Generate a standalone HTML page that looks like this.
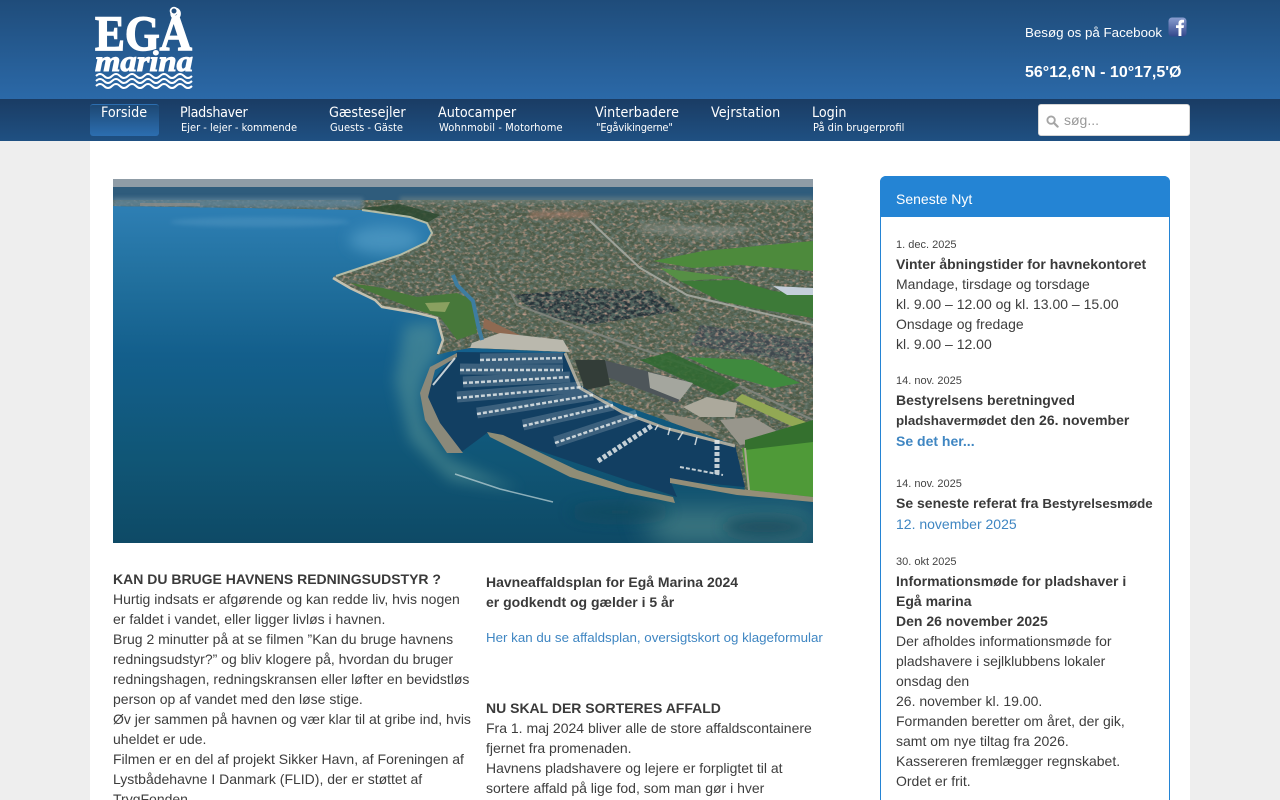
<!DOCTYPE html>
<html lang="da"><head><meta charset="utf-8"><title>Egå Marina</title>
<style>
*{box-sizing:border-box;margin:0;padding:0}
html,body{width:1280px;height:800px;overflow:hidden;background:#eee;font-family:"Liberation Sans",sans-serif;font-size:14px;color:#3d3d3d}
#root{position:relative;width:1280px;height:800px;overflow:hidden}
.a{position:absolute;white-space:nowrap}
#hd{left:0;top:0;width:1280px;height:99px;background:linear-gradient(#1f4c7a,#2b69a8)}
#nv{left:0;top:99px;width:1280px;height:42px;background:linear-gradient(#1a3c64,#1f5082)}
#mn{left:90px;top:141px;width:1100px;height:659px;background:#fff}
.n{font-family:"DejaVu Sans Condensed","DejaVu Sans",sans-serif;font-stretch:condensed;color:#fff;font-size:14.2px;line-height:16px}
.s{font-family:"DejaVu Sans Condensed","DejaVu Sans",sans-serif;font-stretch:condensed;color:#fff;font-size:11px;line-height:12px}
.l{position:absolute;white-space:nowrap;line-height:20px;height:20px}
b{font-weight:bold;color:#3a3a3a}
.d{font-size:11px;color:#444}
.k{color:#3f86c2}
.m{font-size:13.33px}
</style></head><body><div id="root">
<div id="hd" class="a"></div>
<div id="nv" class="a"></div>
<div id="mn" class="a"></div>

<svg class="a" style="left:92px;top:4px" width="104" height="88" viewBox="0 0 104 88">
<text x="3" y="46" font-family="Liberation Serif,serif" font-weight="bold" font-size="50" fill="#fff" stroke="#fff" stroke-width="1.400" textLength="97" lengthAdjust="spacingAndGlyphs">EGÅ</text>
<circle cx="82" cy="7" r="3.400" fill="#24507f" stroke="#fff" stroke-width="1.800"/>
<text x="3" y="67" font-family="Liberation Serif,serif" font-weight="bold" font-style="italic" font-size="30" fill="#fff" stroke="#fff" stroke-width="1" textLength="98" lengthAdjust="spacingAndGlyphs">marina</text>
<g fill="none" stroke="#fff" stroke-width="2">
<path d="M4 72q4-4 8 0t8 0 8 0 8 0 8 0 8 0 8 0 8 0 8 0 8 0 8 0 8 0"/>
<path d="M4 77q4-4 8 0t8 0 8 0 8 0 8 0 8 0 8 0 8 0 8 0 8 0 8 0 8 0"/>
<path d="M4 82q4-4 8 0t8 0 8 0 8 0 8 0 8 0 8 0 8 0 8 0 8 0 8 0 8 0"/>
</g></svg>

<div class="a" style="left:1025px;top:25px;font-size:13.33px;line-height:16px;color:#fff">Besøg os på Facebook</div>
<svg class="a" style="left:1168px;top:17px" width="19" height="20" viewBox="0 0 19 20"><defs><linearGradient id="fb" x1="0" y1="0" x2="0" y2="1"><stop offset="0" stop-color="#8a9ed0"/><stop offset="1" stop-color="#34488c"/></linearGradient></defs><rect x=".5" y=".5" width="18" height="19" rx="3.5" fill="url(#fb)"/><path d="M10.500 19V11H8V8.200h2.500V6.300C10.500 4 12 2.800 14 2.800h2v2.800h-1.300c-1 0-1.300.5-1.300 1.200v1.400H16L15.600 11h-2.200v8z" fill="#fff"/></svg>
<div class="a" style="left:1025px;top:64px;font-size:16px;line-height:18px;font-weight:bold;color:#fff">56°12,6'N - 10°17,5'Ø</div>

<div class="a" style="left:90px;top:104px;width:69px;height:32px;border-radius:3px;background:linear-gradient(#1d4874,#2c6eb0);border-top:1px solid #2c6eb0"></div>
<div class="a n" style="left:101px;top:105px">Forside</div>
<div class="a n" style="left:180px;top:105px;letter-spacing:-.3px">Pladshaver</div><div class="a s" style="left:181px;top:122px">Ejer - lejer - kommende</div>
<div class="a n" style="left:329px;top:105px">Gæstesejler</div><div class="a s" style="left:330px;top:122px">Guests - Gäste</div>
<div class="a n" style="left:438px;top:105px">Autocamper</div><div class="a s" style="left:439px;top:122px;letter-spacing:.1px">Wohnmobil - Motorhome</div>
<div class="a n" style="left:595px;top:105px;letter-spacing:.1px">Vinterbadere</div><div class="a s" style="left:596px;top:122px;letter-spacing:-.2px">"Egåvikingerne"</div>
<div class="a n" style="left:711px;top:105px;letter-spacing:.1px">Vejrstation</div>
<div class="a n" style="left:812px;top:105px">Login</div><div class="a s" style="left:813px;top:122px">På din brugerprofil</div>

<div class="a" style="left:1038px;top:104px;width:152px;height:32px;background:#fff;border:1px solid #d5d5d5;border-radius:3px"></div>
<svg class="a" style="left:1046px;top:115px" width="13" height="13" viewBox="0 0 14 14"><circle cx="5.500" cy="5.500" r="4" fill="none" stroke="#a5a5a5" stroke-width="2"/><path d="M8.500 8.500L12.500 12.500" stroke="#a5a5a5" stroke-width="2.400" stroke-linecap="round"/></svg>
<div class="a" style="left:1064px;top:112px;font-size:14px;line-height:16px;color:#999">søg...</div>

<svg class="a" style="left:113px;top:179px" width="700" height="364" viewBox="113 179 700 364">
<defs>
<linearGradient id="w" gradientUnits="userSpaceOnUse" x1="0" y1="200" x2="0" y2="543"><stop offset="0" stop-color="#2f80b6"/><stop offset=".22" stop-color="#22719f"/><stop offset=".45" stop-color="#135f8c"/><stop offset=".75" stop-color="#105676"/><stop offset="1" stop-color="#0e4a66"/></linearGradient>
<filter id="bl" filterUnits="userSpaceOnUse" x="0" y="100" width="1000" height="600"><feGaussianBlur stdDeviation="14"/></filter>
<filter id="bs" filterUnits="userSpaceOnUse" x="0" y="100" width="1000" height="600"><feGaussianBlur stdDeviation="2"/></filter>
<filter id="bm" filterUnits="userSpaceOnUse" x="0" y="100" width="1000" height="600"><feGaussianBlur stdDeviation="7"/></filter>
<filter id="tx" filterUnits="userSpaceOnUse" x="113" y="179" width="700" height="364"><feTurbulence type="fractalNoise" baseFrequency=".26 .38" numOctaves="2" seed="7"/><feColorMatrix values="0 0 0 0 .6  0 0 0 0 .36  0 0 0 0 .28  2.400 0 0 0 -1.200"/></filter>
<filter id="tx2" filterUnits="userSpaceOnUse" x="113" y="179" width="700" height="364"><feTurbulence type="fractalNoise" baseFrequency=".2 .3" numOctaves="2" seed="21"/><feColorMatrix values="0 0 0 0 .12  0 0 0 0 .18  0 0 0 0 .15  2.600 0 0 0 -.95"/></filter>
<clipPath id="im"><rect x="113" y="179" width="700" height="364"/></clipPath>
<clipPath id="ld"><path d="M113 187H813V500L745 490 735 445 580 390 565 352 470 348 448 352 437 355 443 340 437 318 417 313 382 307 375 300 350 288 333 277 360 268 400 255 427 242 432 233 427 223 410 217 362 210 250 208 113 206z"/></clipPath>
</defs>
<g clip-path="url(#im)">
<rect x="113" y="179" width="700" height="364" fill="url(#w)"/>
<ellipse cx="260" cy="222" rx="90" ry="5" fill="#74add0" opacity=".25" filter="url(#bs)"/>
<ellipse cx="385" cy="240" rx="36" ry="14" fill="#5ca4cc" opacity=".6" filter="url(#bm)"/>
<path d="M405 325L437 322 440 352 425 375 420 400 425 425 447 458 520 490 450 480 410 440 395 380z" fill="#65a09c" opacity=".48" filter="url(#bm)"/>
<path d="M640 510H813V543H660z" fill="#568f8e" opacity=".7" filter="url(#bl)"/>
<ellipse cx="765" cy="527" rx="42" ry="10" fill="#18465a" opacity=".8" filter="url(#bm)"/>
<ellipse cx="620" cy="512" rx="50" ry="8" fill="#19485c" opacity=".7" filter="url(#bm)"/>

<rect x="113" y="179" width="700" height="8" fill="#8f9ca6"/>

<g clip-path="url(#ld)">
<rect x="113" y="187" width="700" height="323" fill="#4e5b48"/>
<path d="M513 295L593 288 653 291 680 311 587 325 540 315z" fill="#27343a"/>
<path d="M700 325L813 340 813 365 690 345z" fill="#3f484e"/>
<rect x="113" y="187" width="700" height="323" filter="url(#tx2)"/>
<rect x="113" y="187" width="700" height="323" filter="url(#tx)"/>
<rect x="113" y="187" width="700" height="13" fill="#2f5c7c"/>
<rect x="113" y="198" width="250" height="10" fill="#5f8298" opacity=".85" filter="url(#bs)"/>
<rect x="140" y="203" width="60" height="3" fill="#9a8f86" opacity=".6"/>
<path d="M362 208L410 217 427 223 440 215 400 204z" fill="#2d4a30" opacity=".85"/>
<rect x="400" y="197" width="413" height="6" fill="#7a8a86" opacity=".55" filter="url(#bs)"/>
<path d="M530 211H590V218H530z" fill="#a87a68" opacity=".6" filter="url(#bs)"/>
<path d="M640 222L760 228 720 238 640 232z" fill="#9a9e98" opacity=".4" filter="url(#bs)"/>
<path d="M653 261L703 251 813 241V271L740 265 693 268z" fill="#4d8a3c"/>
<path d="M660 268L737 278 680 281z" fill="#568f45"/>
<path d="M680 281L737 280 773 291 813 295V318L753 308 720 301z" fill="#3d7a38"/>
<path d="M773 286L813 288V295L787 295z" fill="#c4cfda"/>
<path d="M350 283L373 293 417 310 440 317 457 340 477 333 473 300 457 293 417 297 383 288z" fill="#47783a"/>
<path d="M425 303L450 302 445 312 430 311z" fill="#8aa060"/>
<path d="M484 318L530 340 520 342 483 328z" fill="#8f6a52"/>
<path d="M590 221L640 268 687 295 813 325" stroke="#9fa39a" stroke-width="2" fill="none"/>
<path d="M510 291L517 305 580 328 653 353 727 380 813 420" stroke="#7e837b" stroke-width="2" fill="none"/>
<path d="M687 357L753 360 800 383 773 388 720 373z" fill="#3f8a3e"/>
<path d="M670 352L740 385 720 396 640 360z" fill="#2f6a30" opacity=".85"/>
<path d="M742 394L813 425V436L735 400z" fill="#92a854"/>
<path d="M472 343L500 333 563 340 570 352 470 348z" fill="#bab8ad"/>
<path d="M603 360L693 383 677 403 607 377z" fill="#4e565a"/>
<path d="M648 372L693 383 680 400 650 388z" fill="#a4a69e"/>
<path d="M575 360H605L610 385 585 390z" fill="#333d38"/>
<path d="M683 407L707 397 737 403 735 417 700 417z" fill="#aca99c"/>
<path d="M660 413L700 420 720 432 680 430z" fill="#8f8a7c"/>
<path d="M720 420L753 417 788 438 740 445z" fill="#98968c"/>
<path d="M742 448L813 440V497L748 490z" fill="#4f9a38"/>
<path d="M745 440L813 420V442L745 450z" fill="#34702e"/>
</g>
<path d="M453 275L457 285 473 301 478 325 482 340" stroke="#3e7da0" stroke-width="4" fill="none"/>
<path d="M362 210L410 217 427 223 432 233 427 242 400 255 360 268 336 276" stroke="#b4bca6" stroke-width="2" fill="none"/>
<path d="M333 278L350 288 375 300 382 307 417 313 437 318 443 340 438 354" stroke="#c4c1b0" stroke-width="2.500" fill="none"/>

<path d="M457 352L567 353 577 383 620 410 663 427 735 445 745 487 670 480 677 497 487 433 460 453 430 420 428 387z" fill="#123f62"/>
<path d="M457 353L430 367 420 393 425 420 447 453 463 453 440 423 428 397 435 370 457 357z" fill="#8b897a"/>
<path d="M487 432L503 435 577 470 627 487 673 497 675 503 627 493 570 477 490 437z" fill="#8f8d76"/>
<path d="M670 478L720 487 813 497V502L737 495 670 483z" fill="#948e78"/>
<path d="M745 448L749 490" stroke="#aaa690" stroke-width="2" fill="none"/>
<path d="M565 353L580 388 622 412 665 428 735 446" stroke="#a9a89c" stroke-width="3" fill="none"/>
<g fill="none" stroke="#dfe5e8" opacity=".2" stroke-width="11">
<path d="M480 359L563 358"/><path d="M460 369L563 370"/><path d="M463 382L570 377"/><path d="M457 397L583 387"/><path d="M477 413L593 395"/><path d="M523 425L613 405"/><path d="M555 442L637 415"/>
</g>
<g fill="none" stroke="#e4e9ea" stroke-width="2.500" opacity=".85" stroke-dasharray="4 2">
<path d="M480 360L563 358"/><path d="M460 370L563 370"/><path d="M463 383L570 377"/><path d="M457 398L583 387"/><path d="M477 414L593 395"/><path d="M523 426L613 405"/><path d="M555 443L637 415"/>
<path d="M598 461L653 425" stroke-width="5"/>
<path d="M680 467L723 475" stroke-width="2"/>
<path d="M717 440V475" stroke-width="5"/>
<path d="M433 385L455 358" stroke-width="2" stroke-dasharray="none"/>
<path d="M655 430L658 425M670 428L668 435M683 432L678 440M697 437L695 445" stroke-width="1.500" stroke-dasharray="none"/>
</g>
<path d="M455 474L500 489 553 502" stroke="#cfe0e2" stroke-width="1.500" fill="none" opacity=".65"/>
</g>
</svg>

<div class="l" style="left:113px;top:569px"><b>KAN DU BRUGE HAVNENS REDNINGSUDSTYR ?</b></div>
<div class="l" style="left:113px;top:589px">Hurtig indsats er afgørende og kan redde liv, hvis nogen</div>
<div class="l" style="left:113px;top:609px">er faldet i vandet, eller ligger livløs i havnen.</div>
<div class="l" style="left:113px;top:629px">Brug 2 minutter på at se filmen ”Kan du bruge havnens</div>
<div class="l" style="left:113px;top:649px">redningsudstyr?” og bliv klogere på, hvordan du bruger</div>
<div class="l" style="left:113px;top:669px">redningshagen, redningskransen eller løfter en bevidstløs</div>
<div class="l" style="left:113px;top:689px">person op af vandet med den løse stige.</div>
<div class="l" style="left:113px;top:709px">Øv jer sammen på havnen og vær klar til at gribe ind, hvis</div>
<div class="l" style="left:113px;top:729px">uheldet er ude.</div>
<div class="l" style="left:113px;top:749px">Filmen er en del af projekt Sikker Havn, af Foreningen af</div>
<div class="l" style="left:113px;top:769px">Lystbådehavne I Danmark (FLID), der er støttet af</div>
<div class="l" style="left:113px;top:789px">TrygFonden.</div>

<div class="l" style="left:486px;top:572px"><b>Havneaffaldsplan for Egå Marina 2024</b></div>
<div class="l" style="left:486px;top:592px"><b>er godkendt og gælder i 5 år</b></div>
<div class="l k m" style="left:486px;top:628px">Her kan du se affaldsplan, oversigtskort og klageformular</div>
<div class="l" style="left:486px;top:698px"><b>NU SKAL DER SORTERES AFFALD</b></div>
<div class="l" style="left:486px;top:718px">Fra 1. maj 2024 bliver alle de store affaldscontainere</div>
<div class="l" style="left:486px;top:738px">fjernet fra promenaden.</div>
<div class="l" style="left:486px;top:758px">Havnens pladshavere og lejere er forpligtet til at</div>
<div class="l" style="left:486px;top:778px">sortere affald på lige fod, som man gør i hver</div>

<div class="a" style="left:880px;top:176px;width:290px;height:640px;border:1px solid #2484d4;border-radius:6px 6px 0 0;background:#fff"></div>
<div class="a" style="left:880px;top:176px;width:290px;height:41px;background:#2484d4;border-radius:6px 6px 0 0"></div>
<div class="a" style="left:896px;top:190px;font-size:14px;line-height:18px;color:#fff">Seneste Nyt</div>

<div class="l d" style="left:896px;top:235px">1. dec. 2025</div>
<div class="l" style="left:896px;top:254px"><b>Vinter åbningstider for havnekontoret</b></div>
<div class="l" style="left:896px;top:274px">Mandage, tirsdage og torsdage</div>
<div class="l" style="left:896px;top:294px">kl. 9.00 – 12.00 og kl. 13.00 – 15.00</div>
<div class="l" style="left:896px;top:314px">Onsdage og fredage</div>
<div class="l" style="left:896px;top:334px">kl. 9.00 – 12.00</div>

<div class="l d" style="left:896px;top:371px">14. nov. 2025</div>
<div class="l" style="left:896px;top:390px"><b>Bestyrelsens beretningved</b></div>
<div class="l" style="left:896px;top:410px"><b style="font-size:13.33px">pladshavermødet</b><b> den 26. november</b></div>
<div class="l k" style="left:896px;top:431px"><b style="color:#3f86c2">Se det her...</b></div>

<div class="l d" style="left:896px;top:474px">14. nov. 2025</div>
<div class="l" style="left:896px;top:493px"><b>Se seneste referat fra </b><b style="font-size:13.33px">Bestyrelsesmøde</b></div>
<div class="l k" style="left:896px;top:514px">12. november 2025</div>

<div class="l d" style="left:896px;top:552px">30. okt 2025</div>
<div class="l" style="left:896px;top:571px"><b>Informationsmøde for pladshaver i</b></div>
<div class="l" style="left:896px;top:591px"><b>Egå marina</b></div>
<div class="l" style="left:896px;top:611px"><b>Den 26 november 2025</b></div>
<div class="l" style="left:896px;top:631px">Der afholdes informationsmøde for</div>
<div class="l" style="left:896px;top:651px">pladshavere i sejlklubbens lokaler</div>
<div class="l" style="left:896px;top:671px">onsdag den</div>
<div class="l" style="left:896px;top:691px">26. november kl. 19.00.</div>
<div class="l" style="left:896px;top:711px">Formanden beretter om året, der gik,</div>
<div class="l" style="left:896px;top:731px">samt om nye tiltag fra 2026.</div>
<div class="l" style="left:896px;top:751px">Kassereren fremlægger regnskabet.</div>
<div class="l" style="left:896px;top:771px">Ordet er frit.</div>
</div></body></html>
